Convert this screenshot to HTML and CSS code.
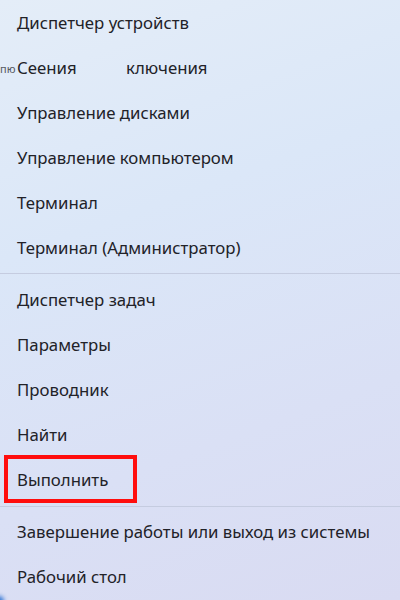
FILE: index.html
```html
<!DOCTYPE html>
<html lang="ru">
<head>
<meta charset="utf-8">
<link rel="stylesheet" href="styles.css">
</head>
<body>
<div class="menu">
  <div class="group">
    <div class="item">Диспетчер устройств</div>
    <div class="item glitch"><span class="ghost">пю</span>Се<span class="hid">тевые под</span>ключения<span class="ghost2">ения</span></div>
    <div class="item">Управление дисками</div>
    <div class="item">Управление компьютером</div>
    <div class="item">Терминал</div>
    <div class="item">Терминал (Администратор)</div>
  </div>
  <div class="sep"></div>
  <div class="group">
    <div class="item">Диспетчер задач</div>
    <div class="item">Параметры</div>
    <div class="item">Проводник</div>
    <div class="item">Найти</div>
    <div class="item boxed"><span class="box"></span>Выполнить</div>
  </div>
  <div class="sep sep2"></div>
  <div class="group">
    <div class="item">Завершение работы или выход из системы</div>
    <div class="item">Рабочий стол</div>
  </div>
  <span class="corner"></span>
</div>
</body>
</html>
```
FILE: styles.css
```css
html, body {
  margin: 0;
  padding: 0;
}
body {
  width: 400px;
  height: 600px;
  overflow: hidden;
  background: linear-gradient(160deg, #e4edf8 0%, #dbe7f8 35%, #dae0f5 70%, #d9dbf2 100%);
  font-family: "Noto Sans", "Open Sans", sans-serif;
  color: #222228;
}
.menu {
  position: relative;
  height: 600px;
}
.group {
  display: flex;
  flex-direction: column;
}
.item {
  position: relative;
  height: 45px;
  display: flex;
  align-items: center;
  padding-left: 17px;
  font-size: 16.8px;
  white-space: nowrap;
}
.sep {
  height: 1px;
  margin: 3px 0 3px;
  background: #c5cce0;
}
.sep2 {
  margin: 4px 0 2px;
}
.glitch .hid {
  display: inline-block;
  width: 89px;
  overflow: hidden;
  color: transparent;
}
.glitch .ghost {
  position: absolute;
  left: 0;
  top: 16px;
  font-size: 11px;
  color: #55595f;
}
.glitch .ghost2 {
  position: absolute;
  left: 37px;
  top: 11px;
}
.box {
  position: absolute;
  left: 4px;
  top: -2px;
  width: 133px;
  height: 48px;
  box-sizing: border-box;
  border: 4px solid #ff0d0d;
}
.corner {
  position: absolute;
  left: -6px;
  bottom: -6px;
  width: 10px;
  height: 10px;
  border-radius: 50%;
  background: #3a7bd5;
  filter: blur(2px);
}
```
